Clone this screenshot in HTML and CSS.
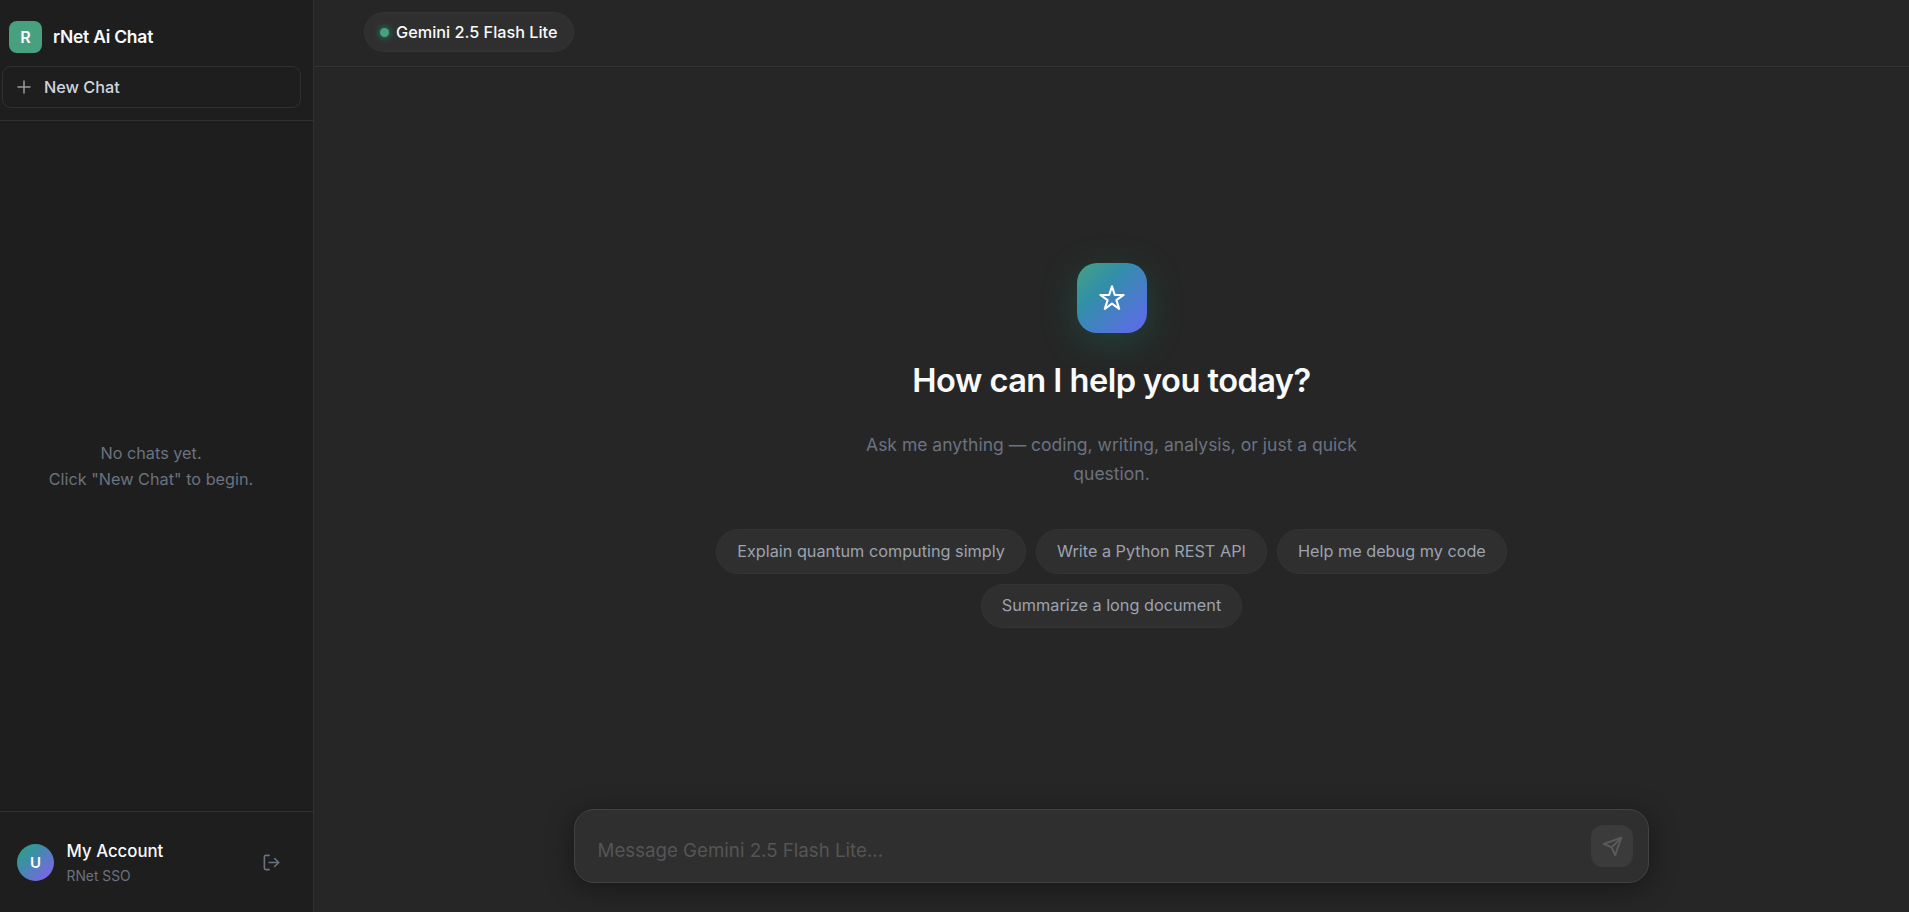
FILE: index.html
```
<!DOCTYPE html>
<html lang="en">
<head>
  <meta charset="UTF-8">
  <meta name="viewport" content="width=device-width, initial-scale=1.0">
  <title>rNet Ai Chat</title>
  <link rel="stylesheet" href="styles.css">
</head>
<body>
  <aside class="sidebar">
    <div class="sidebar-header">
      <div class="brand">
        <div class="brand-logo">R</div>
        <span class="brand-name">rNet Ai Chat</span>
      </div>
      <button class="new-chat">
        <svg width="18" height="18" viewBox="0 0 24 24" fill="none" stroke="currentColor" stroke-width="2" stroke-linecap="round"><path d="M12 4v16M4 12h16"/></svg>
        <span>New Chat</span>
      </button>
    </div>
    <div class="chat-list">
      <p class="no-chats">No chats yet.<br>Click "New Chat" to begin.</p>
    </div>
    <div class="sidebar-footer">
      <div class="avatar">U</div>
      <div class="user-info">
        <div class="user-name">My Account</div>
        <div class="user-plan">RNet SSO</div>
      </div>
      <button class="logout" aria-label="Logout">
        <svg width="19" height="19" viewBox="0 0 24 24" fill="none" stroke="currentColor" stroke-width="2" stroke-linecap="round" stroke-linejoin="round"><path d="M9 21H5a2 2 0 0 1-2-2V5a2 2 0 0 1 2-2h4"/><path d="M16 17l5-5-5-5"/><path d="M21 12H9"/></svg>
      </button>
    </div>
  </aside>

  <main class="main">
    <header class="topbar">
      <div class="model-badge"><span class="dot"></span>Gemini 2.5 Flash Lite</div>
    </header>
    <section class="welcome">
      <div class="welcome-icon">
        <svg width="28" height="28" viewBox="0 0 24 24" fill="none" stroke="currentColor" stroke-width="1.8" stroke-linecap="round" stroke-linejoin="round"><path d="M12 2l2.4 7.4H22l-6.2 4.5 2.4 7.4L12 16.8l-6.2 4.5 2.4-7.4L2 9.4h7.6z"/></svg>
      </div>
      <h1>How can I help you today?</h1>
      <p class="welcome-text">Ask me anything — coding, writing, analysis, or just a quick question.</p>
      <div class="chips">
        <button class="chip">Explain quantum computing simply</button>
        <button class="chip">Write a Python REST API</button>
        <button class="chip">Help me debug my code</button>
        <button class="chip">Summarize a long document</button>
      </div>
    </section>
    <div class="input-area">
      <form class="input-box">
        <textarea id="message" rows="1" placeholder="Message Gemini 2.5 Flash Lite..."></textarea>
        <button class="send" type="submit" aria-label="Send" disabled>
          <svg width="21" height="21" viewBox="0 0 24 24" fill="none" stroke="currentColor" stroke-width="2.3" stroke-linecap="round" stroke-linejoin="round"><path d="M22 2L11 13"/><path d="M22 2l-7 20-4-9-9-4z"/></svg>
        </button>
      </form>
    </div>
  </main>
</body>
</html>
```

FILE: styles.css
```
* {
  box-sizing: border-box;
  margin: 0;
  padding: 0;
}
body {
  display: flex;
  height: 100vh;
  overflow: hidden;
  font-family: Inter, "Liberation Sans", sans-serif;
  background: #262626;
  color: #f9fafb;
}
button, textarea {
  font-family: inherit;
}
.sidebar {
  display: flex;
  flex-direction: column;
  flex-shrink: 0;
  width: 314px;
  background: #1e1e1e;
  border-right: 1px solid #303030;
}
.sidebar-header {
  height: 121px;
  padding: 21px 12px 12px 2px;
  border-bottom: 1px solid #303030;
}
.brand {
  display: flex;
  align-items: center;
  gap: 11px;
  height: 32px;
  margin: 0 0 13px 7px;
}
.brand-logo {
  width: 33px;
  height: 32px;
  border-radius: 8px;
  background: #47a17f;
  color: #fff;
  font-size: 16px;
  font-weight: 600;
  line-height: 32px;
  text-align: center;
}
.brand-name {
  padding-bottom: 1px;
  font-size: 17.5px;
  font-weight: 600;
  letter-spacing: -0.25px;
}
.new-chat {
  display: flex;
  align-items: center;
  gap: 11px;
  width: 299px;
  height: 42px;
  padding: 0 12px;
  border: 1px solid #303030;
  border-radius: 9px;
  background: transparent;
  color: #d1d5db;
  font-size: 16.25px;
  font-weight: 500;
}
.new-chat svg {
  color: #9a9a9e;
}
.chat-list {
  display: flex;
  flex: 1;
  align-items: center;
  justify-content: center;
  padding-right: 11px;
}
.no-chats {
  color: #6b7280;
  font-size: 16.25px;
  line-height: 26px;
  text-align: center;
}
.sidebar-footer {
  display: flex;
  align-items: center;
  height: 101px;
  padding: 0 32px 0 17px;
  border-top: 1px solid #303030;
}
.avatar {
  width: 37px;
  height: 37px;
  border-radius: 50%;
  background: linear-gradient(135deg, #2aa57f, #3b8fa5 35%, #8b5cf6);
  color: #fff;
  font-size: 15px;
  font-weight: 600;
  line-height: 37px;
  text-align: center;
}
.user-info {
  flex: 1;
  margin-left: 12.6px;
  padding-top: 2px;
}
.user-name {
  font-size: 16.8px;
  font-weight: 500;
  line-height: 25px;
}
.user-plan {
  color: #6b7280;
  font-size: 13.8px;
  line-height: 24px;
}
.logout {
  display: flex;
  border: none;
  background: none;
  color: #6b7280;
}
.main {
  display: flex;
  flex: 1;
  flex-direction: column;
}
.topbar {
  height: 67px;
  padding: 12px 50px;
  border-bottom: 1px solid #343434;
}
.model-badge {
  display: inline-flex;
  align-items: center;
  gap: 7px;
  height: 40px;
  padding: 0 15px;
  border: 1px solid #343434;
  border-radius: 20px;
  background: #2f2f2f;
  font-size: 16.25px;
  font-weight: 500;
}
.dot {
  width: 9px;
  height: 9px;
  border-radius: 50%;
  background: #47a17f;
  box-shadow: 0 0 7px #10a37f;
}
.welcome {
  display: flex;
  flex: 1;
  flex-direction: column;
  align-items: center;
  padding-top: 196px;
}
.welcome-icon {
  display: flex;
  align-items: center;
  justify-content: center;
  width: 70px;
  height: 70px;
  border-radius: 20px;
  background: linear-gradient(135deg, #47a17f, #318fa8 35%, #6366f1);
  color: #fff;
  box-shadow: 0 9px 37px rgba(16, 163, 127, 0.25);
}
.welcome h1 {
  margin-top: 27px;
  font-size: 32.6px;
  font-weight: 600;
  line-height: 40px;
  letter-spacing: -0.54px;
}
.welcome-text {
  width: 500px;
  margin-top: 30px;
  color: #6b7280;
  font-size: 17.5px;
  line-height: 29px;
  text-align: center;
}
.chips {
  display: flex;
  flex-wrap: wrap;
  justify-content: center;
  gap: 10px;
  width: 815px;
  margin-top: 41px;
}
.chip {
  height: 44.6px;
  padding: 0 20px 1px;
  border: 1px solid #343434;
  border-radius: 23px;
  background: #2f2f2f;
  color: #9ca3af;
  font-size: 16.25px;
}
.input-area {
  display: flex;
  justify-content: center;
  padding-bottom: 29px;
}
.input-box {
  display: flex;
  width: 1075px;
  height: 74px;
  padding: 15px 15px 15px 22.5px;
  border: 1px solid #424242;
  border-radius: 20px;
  background: #2f2f2f;
  box-shadow: 0 5px 28px rgba(0, 0, 0, 0.4);
}
.input-box textarea {
  flex: 1;
  padding-top: 11px;
  border: none;
  outline: none;
  resize: none;
  background: transparent;
  color: #f9fafb;
  font-size: 18.7px;
  line-height: 30px;
}
.input-box textarea::placeholder {
  color: #555;
}
.send {
  display: flex;
  align-items: center;
  justify-content: center;
  width: 42px;
  height: 42px;
  border: none;
  border-radius: 12px;
  background: #3b3b3b;
  color: #5a5a5a;
}
```
